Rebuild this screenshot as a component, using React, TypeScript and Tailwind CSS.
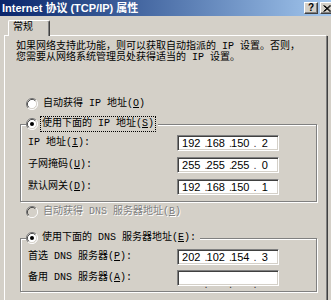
import React from "react";

function Radio({ checked, disabled }: { checked?: boolean; disabled?: boolean }) {
  return (
    <svg width="12" height="12" viewBox="0 0 12 12" className="shrink-0">
      <circle cx="6" cy="6" r="5" fill={disabled ? "#d4d0c8" : "#ffffff"} />
      <path d="M2.04 9.96 A5.6 5.6 0 0 1 9.96 2.04" fill="none" stroke="#808080" strokeWidth="1" />
      <path d="M9.96 2.04 A5.6 5.6 0 0 1 2.04 9.96" fill="none" stroke="#ffffff" strokeWidth="1" />
      <path d="M2.75 9.25 A4.6 4.6 0 0 1 9.25 2.75" fill="none" stroke="#404040" strokeWidth="1" />
      <path d="M9.25 2.75 A4.6 4.6 0 0 1 2.75 9.25" fill="none" stroke="#d4d0c8" strokeWidth="1" />
      {checked && <circle cx="6" cy="6" r="2" fill="#000000" />}
    </svg>
  );
}

function IpBox({ parts }: { parts: string[] }) {
  return (
    <div className="w-[102px] h-[16px] shrink-0 bg-white border border-t-[#808080] border-l-[#808080] border-b-white border-r-white shadow-[inset_1px_1px_0_#404040,inset_-1px_-1px_0_#d4d0c8] flex items-center px-[1px] font-['Liberation_Sans',sans-serif] text-[11px] text-black">
      {parts.map((p, i) => (
        <div key={i} className="relative flex-1 text-center leading-[12px]">
          {i > 0 && <span className="absolute left-[1px] top-0 text-[#404040]">.</span>}
          {p}
        </div>
      ))}
    </div>
  );
}

function U({ c }: { c: string }) {
  return <span className="underline underline-offset-[1px]">{c}</span>;
}

function Row({ label, parts }: { label: React.ReactNode; parts: string[] }) {
  return (
    <div className="flex items-center h-[16px]">
      <div className="w-[156px] pl-[7px] whitespace-pre leading-[12px]">{label}</div>
      <IpBox parts={parts} />
    </div>
  );
}

export default function App() {
  return (
    <div className="w-[331px] h-[300px] overflow-hidden bg-[#d4d0c8] font-['Liberation_Mono','Noto_Sans_CJK_SC',monospace] text-[10px] text-black">
      <div className="w-[336px]">
        {/* Title bar */}
        <div className="h-[16px] flex items-center bg-linear-to-r from-[#0a246a] to-[#a6caf0] pl-[2px] pr-[2px]">
          <span className="flex-1 whitespace-pre font-['Liberation_Sans','Noto_Sans_CJK_SC',sans-serif] font-bold text-[11px] text-white leading-none">
            Internet 协议 (TCP/IP) 属性
          </span>
          <div className="flex gap-[2px]">
            <div className="w-[14px] h-[12px] bg-[#d4d0c8] border border-t-white border-l-white border-b-[#404040] border-r-[#404040] shadow-[inset_-1px_-1px_0_#808080] flex items-center justify-center font-['Liberation_Sans',sans-serif] font-bold text-[10px] leading-none text-black">
              ?
            </div>
            <div className="w-[14px] h-[12px] bg-[#d4d0c8] border border-t-white border-l-white border-b-[#404040] border-r-[#404040] shadow-[inset_-1px_-1px_0_#808080] flex items-center justify-center">
              <svg width="8" height="7" viewBox="0 0 8 7">
                <path d="M0.5 0.5 L7 6.5 M1.5 0.5 L8 6.5 M7 0.5 L0.5 6.5 M8 0.5 L1.5 6.5" stroke="#000" strokeWidth="1" />
              </svg>
            </div>
          </div>
        </div>

        {/* Tab row */}
        <div className="flex items-end pt-[4px]">
          <div className="w-[4px]" />
          <div className="w-[4px] border-b border-white" />
          <div className="w-[42px] h-[16px] border-l border-t border-r border-l-white border-t-white border-r-[#404040] shadow-[inset_-1px_0_0_#808080] rounded-tl-[2px] rounded-tr-[2px] pl-[4px] pt-[1px] leading-[12px]">
            常规
          </div>
          <div className="w-[276px] border-b border-white" />
        </div>

        {/* Panel */}
        <div className="ml-[4px] w-[324px] h-[270px] border-l border-r border-l-white border-r-[#404040] shadow-[inset_-1px_0_0_#808080]">
          <div className="ml-[11px] pt-[5px] leading-[11px] whitespace-pre">
            <div>如果网络支持此功能，则可以获取自动指派的 IP 设置。否则，</div>
            <div>您需要从网络系统管理员处获得适当的 IP 设置。</div>
          </div>

          <div className="mt-[34px] ml-[21px] h-[14px] flex items-center gap-[5px]">
            <Radio />
            <span className="whitespace-pre leading-[12px]">
              自动获得 IP 地址(<U c="O" />)
            </span>
          </div>

          <fieldset className="mt-[5px] ml-[15px] w-[297px] border border-[#808080] shadow-[inset_1px_1px_0_#ffffff,1px_1px_0_#ffffff] pt-[3px] pb-[6px]">
            <legend className="ml-[5px] pr-[2px] bg-[#d4d0c8] p-0">
              <div className="flex items-center gap-[2px] h-[16px]">
                <Radio checked />
                <span className="whitespace-pre border border-dotted border-black pl-[1px] pr-[1px] leading-[14px]">
                  使用下面的 IP 地址(<U c="S" />)
                </span>
              </div>
            </legend>
            <div className="flex flex-col gap-[6px]">
              <Row label={<>IP 地址(<U c="I" />):</>} parts={["192", "168", "150", "2"]} />
              <Row label={<>子网掩码(<U c="U" />):</>} parts={["255", "255", "255", "0"]} />
              <Row label={<>默认网关(<U c="D" />):</>} parts={["192", "168", "150", "1"]} />
            </div>
          </fieldset>

          <div className="mt-[3px] ml-[21px] h-[14px] flex items-center gap-[5px]">
            <Radio disabled />
            <span className="whitespace-pre leading-[12px] text-[#808080] [text-shadow:1px_1px_0_#ffffff]">
              自动获得 DNS 服务器地址(<U c="B" />)
            </span>
          </div>

          <fieldset className="mt-[11px] ml-[15px] w-[297px] border border-[#808080] shadow-[inset_1px_1px_0_#ffffff,1px_1px_0_#ffffff] pt-[3px] pb-[5px]">
            <legend className="ml-[5px] pr-[2px] bg-[#d4d0c8] p-0">
              <div className="flex items-center gap-[2px] h-[16px]">
                <Radio checked />
                <span className="whitespace-pre border border-transparent pl-[1px] pr-[1px] leading-[14px]">
                  使用下面的 DNS 服务器地址(<U c="E" />):
                </span>
              </div>
            </legend>
            <div className="flex flex-col gap-[5px]">
              <Row label={<>首选 DNS 服务器(<U c="P" />):</>} parts={["202", "102", "154", "3"]} />
              <Row label={<>备用 DNS 服务器(<U c="A" />):</>} parts={["", "", "", ""]} />
            </div>
          </fieldset>
        </div>
      </div>
    </div>
  );
}
